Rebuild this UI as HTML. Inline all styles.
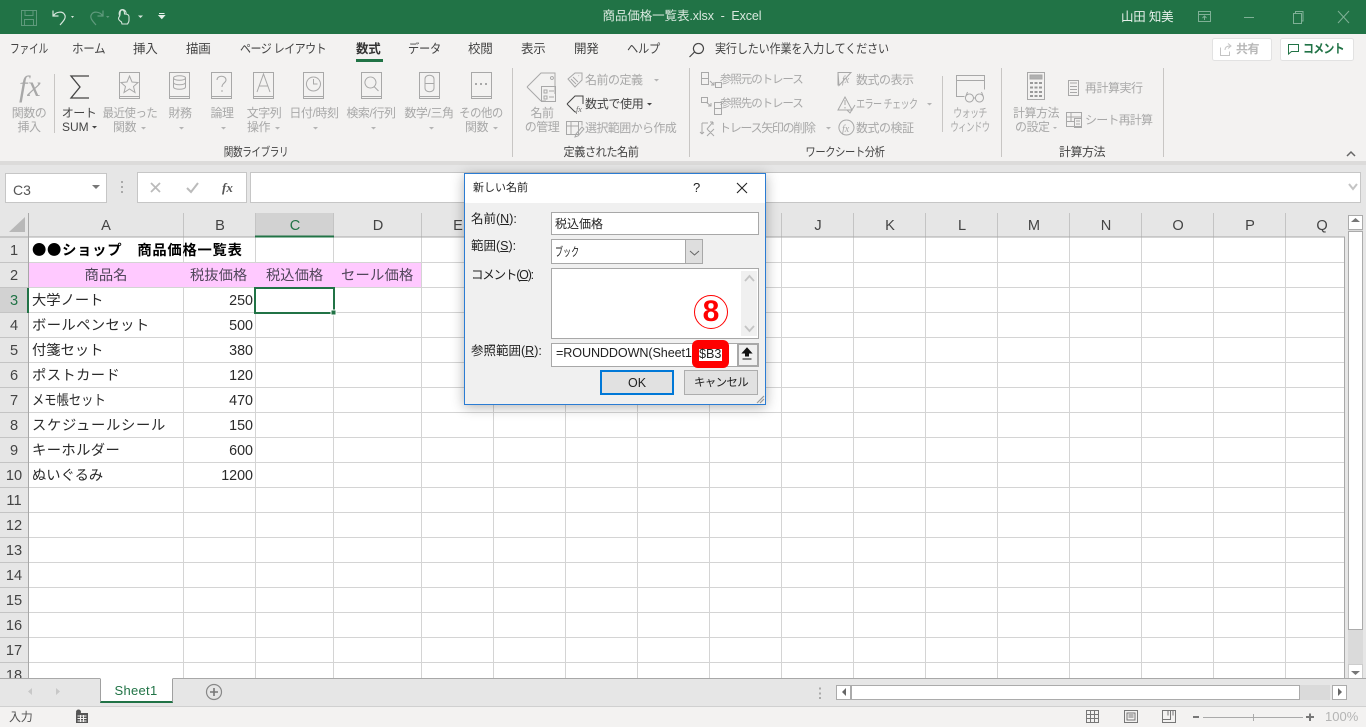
<!DOCTYPE html>
<html lang="ja"><head><meta charset="utf-8"><title>商品価格一覧表.xlsx - Excel</title>
<style>
html,body{margin:0;padding:0}
body{width:1366px;height:727px;overflow:hidden;position:relative;background:#e6e6e6;font-family:"Liberation Sans","Noto Sans CJK JP",sans-serif;}
.t{position:absolute;white-space:nowrap;line-height:16px;font-size:12px;color:#a8a8a8;letter-spacing:-.5px}
.c{transform:translateX(-50%)}
.s{transform-origin:0 50%}
.k{color:#444}
.tab{top:41px;color:#444;font-size:12.5px;letter-spacing:-.3px}
.cell{font-size:14.3px;color:#2a2a2a;letter-spacing:0;line-height:18px}
.pk{color:#50465a}
.hd{font-size:14.6px;color:#444;letter-spacing:0;line-height:18px}
.grp{color:#444;top:144px}
.b{position:absolute;box-sizing:border-box}
.dl{font-size:12.5px;color:#222;letter-spacing:0}
.dl u{text-decoration:underline}
svg{position:absolute;overflow:visible}
</style></head><body>
<!-- title bar -->
<div class="b" style="left:0;top:0;width:1366px;height:34px;background:#217346"></div>
<svg style="left:0;top:0" width="1366" height="34" fill="none">
<g stroke="#5f9a7c" stroke-width="1"><path d="M21.500 10.500h15v15h-15zM25 10.500v5h8v-5M24.500 25.500v-6h9v6"/></g>
<path d="M53 10.500v5.500h5.500M53.500 15.500c3-4 9-4.500 11-1 2 3-.5 6-4.500 10.500" stroke="#d6e6dc" stroke-width="1.200"/>
<path d="M71 16l3 0-1.500 2z" fill="#d6e6dc"/>
<path d="M103 10.500v5.500h-5.500M102.500 15.500c-3-4-9-4.500-11-1-2 3 .5 6 4.500 10.500" stroke="#5f9a7c" stroke-width="1.200"/>
<path d="M106 16l3.500 0-1.700 2z" fill="#5f9a7c"/>
<path d="M121.500 22c-1.500-1-3-2-3-3.500s1.500-2 1.500-4 0-4.500 2.200-4.500 2.300 2 2.300 4c2 0 4.500.5 4.500 3v3.500c0 1.500-1 2.500-1.500 3.500h-5.500z M119.500 15.500c-1-3 .5-6 3-6s4 2.500 3.500 5" stroke="#d6e6dc" stroke-width="1.100"/>
<path d="M138 15.500h5l-2.500 2.500z" fill="#d6e6dc"/>
<path d="M159 13.500h5.500M159 15.500h5.500l-2.700 3z" stroke="#e4efe8" stroke-width="1"/><path d="M159 15.500h5.500l-2.700 3z" fill="#e4efe8"/>
<!-- window buttons -->
<path d="M1198.500 11.500h12v10h-12zM1198.500 14.500h12M1204.500 20v-4M1202.500 18l2-2 2 2" stroke="#7fb096" stroke-width="1"/>
<path d="M1244 17.500h10" stroke="#7fb096"/>
<path d="M1293.500 13.500h8v10h-8zM1295.500 13.500v-2h7.500v9.500h-1.500" stroke="#7fb096"/>
<path d="M1338 11l11 12M1349 11l-11 12" stroke="#7fb096"/>
</svg>
<div class="t c" style="left:682px;top:8px;color:#d9e8de;font-size:12.5px;letter-spacing:-.1px">商品価格一覧表.xlsx&nbsp; -&nbsp; Excel</div>
<div class="t" style="left:1121px;top:9px;color:#e6f0ea;font-size:12.5px;letter-spacing:-.2px">山田 知美</div>
<!-- ribbon -->
<div class="b" style="left:0;top:34px;width:1366px;height:127px;background:#f3f2f1"></div>
<div class="b" style="left:0;top:161px;width:1366px;height:4px;background:#dcdbda"></div>
<span class="t tab s" style="left:10px;transform:scaleX(.78)">ファイル</span>
<span class="t tab s" style="left:72px;transform:scaleX(.92)">ホーム</span>
<span class="t tab" style="left:133px">挿入</span>
<span class="t tab" style="left:186px">描画</span>
<span class="t tab s" style="left:240px;letter-spacing:-.6px;transform:scaleX(.88)">ページ レイアウト</span>
<span class="t tab" style="left:356px;font-weight:bold;color:#333">数式</span>
<div class="b" style="left:356px;top:59px;width:27px;height:3px;background:#217346"></div>
<span class="t tab s" style="left:408px;transform:scaleX(.9)">データ</span>
<span class="t tab" style="left:468px">校閲</span>
<span class="t tab" style="left:521px">表示</span>
<span class="t tab" style="left:574px">開発</span>
<span class="t tab s" style="left:627px;transform:scaleX(.9)">ヘルプ</span>
<svg style="left:0;top:0" width="1366" height="165" fill="none">
<path d="M699.500 44.500a5 5 0 1 1-.1 0M695.500 53l-5 5" stroke="#444" stroke-width="1.200" transform="translate(-1,-1)"/>
<!-- separators -->
<g stroke="#c8c6c4">
<path d="M54.500 74v59M512.500 68v89M689.500 68v89M1001.500 68v89M1163.500 68v89M942.500 76v56"/>
</g>
<!-- fx -->
<text x="19" y="96" font-family="Liberation Serif" font-style="italic" font-size="30" fill="#a8a8a8">fx</text>
<!-- sigma -->
<path d="M89 76H71l9 11-9 11h18" stroke="#444" stroke-width="1.300"/>
<g stroke="#a8a8a8">
<!-- book icons -->
<path d="M119.500 72.500h20v26h-20zM119.500 96.500h20"/>
<path d="M129.500 76l2.500 6 6 .5-4.500 4 1.500 6-5.500-3.500-5.500 3.500 1.500-6-4.500-4 6-.5z"/>
<path d="M169.500 72.500h20v26h-20zM169.500 96.500h20M173.500 78c0-3 12-3 12 0v9c0 3-12 3-12 0zM173.500 78c0 3 12 3 12 0M173.500 82.500c0 3 12 3 12 0M173.500 87c0 3 12 3 12 0"/>
<path d="M211.500 72.500h20v26h-20zM211.500 96.500h20M217 80c0-5 9-5 9 0 0 3-4 3-4 7M222 90v2"/>
<path d="M253.500 72.500h20v26h-20zM253.500 96.500h20M257 92l6.500-18 6.500 18M259 86h9"/>
<path d="M303.500 72.500h20v26h-20zM303.500 96.500h20M313.500 77a7 7 0 1 1-.1 0M313.500 79v5h4"/>
<path d="M361.500 72.500h20v26h-20zM361.500 96.500h20M370.500 77a5.500 5.500 0 1 1-.1 0M374.500 87l4 4"/>
<path d="M419.500 72.500h20v26h-20zM419.500 96.500h20M425 79c0-5 9-5 9 0v9c0 5-9 5-9 0zM425 83.500h9"/>
<path d="M471.500 72.500h20v26h-20zM471.500 96.500h20"/>
<path d="M475 84h2M480 84h2M485 84h2" stroke-width="2"/>
<!-- tag -->
<path d="M527 87l14-14h14v21M541 101l-14-14M541 101h5"/>
<path d="M541.500 86.500h14v15h-14zM544 90h3v3h-3zM544 96h3v3h-3zM549 91h5M549 97h5"/>
<path d="M552 76.500a1.500 1.500 0 1 1-.1 0"/>
<path d="M568 79l7-6h7v7l-7 7zM578.500 75.500l.5.500M571 79l5 5M573 77l5 5"/>
<!-- selection -->
<path d="M566.500 121.500h12v13h-12zM566.500 126h12M571 121.500v13M576 134l6-7 2 2-6 7-3 1zM578 121.500h4v4"/>
<!-- trace -->
<path d="M701.500 72.500h7v6h-7zM701.500 78.500v6h7v-6M710 81l4 4M714 82v3h-3M715.500 87.500v-5h6v5z"/>
<path d="M701.500 97.500h6v5h-6zM714.500 102.500h7v6h-7zM714.500 108.500v6h7v-6M706 102l5 4M711 103v3h-3"/>
<path d="M702 123v11M702 134l-2-2M702 134l2-2M702 123h6M707 129l6-7M713 122h-3M713 122v3M707 129l7 7M714 129l-7 7"/>
<!-- formula show -->
<path d="M838 72.500h13l-12 13zM838 72.500v13"/>
<path d="M838 110l7-13 7 13zM845 100v5M845 107v1.500M847 110l3 3 5-8"/>
<path d="M846.500 120a7.500 7.500 0 1 1-.1 0"/>
<!-- watch -->
<path d="M956.500 75.500h28v5h-28zM956.500 75.500v21h8M984.500 80.500v9"/>
<path d="M969.500 94a4 4 0 1 1-.1 0M979.500 94a4 4 0 1 1-.1 0M973.500 98h2M965.500 97l2-5M983.500 97l-2-5"/>
<!-- calc -->
<path d="M1027.500 72.500h17v27h-17z"/>
<path d="M1030 75h12v4h-12z" fill="#b0b0b0"/>
<path d="M1030 83h3M1034.500 83h3M1039 83h3M1030 87.500h3M1034.500 87.500h3M1039 87.500h3M1030 92h3M1034.500 92h3M1039 92h3M1030 96h3M1034.500 96h3M1039 96h3" stroke-width="2" stroke="#999"/>
<path d="M1068.500 80.500h10v15h-10zM1070 83h7M1070 86.500h7M1070 89.500h7M1070 92.500h7"/>
<path d="M1066.500 112.500h15v14h-15zM1066.500 117h15M1066.500 121.500h8M1071 112.500v9M1074.500 118.500h7v9h-7zM1076 121h4M1076 124h4"/>
</g>
<!-- use formula tag -->
<path d="M567 104l8-8h8v8M575 112l-8-8M575 112h1" stroke="#444"/>
<text x="576" y="112" font-family="Liberation Serif" font-style="italic" font-size="8" fill="#666">fx</text>
<text x="842" y="83" font-family="Liberation Serif" font-style="italic" font-size="10" fill="#a8a8a8">fx</text>
<text x="842" y="132" font-family="Liberation Serif" font-style="italic" font-size="10" fill="#a8a8a8">fx</text>
<!-- comment -->
<rect x="1212.500" y="38.500" width="59" height="22" rx="2" fill="#fff" stroke="#e2e2e2"/>
<rect x="1280.500" y="38.500" width="73" height="22" rx="2" fill="#fff" stroke="#e2e2e2"/>
<path d="M1220.500 47.500v8h9v-4M1225 50c0-3 2-4 5-4M1228 43.500l3 2.500-3 2.500" stroke="#c4c4c4"/>
<path d="M1288.500 44.500h10v7h-7l-3 2.500z" stroke="#217346"/>
<!-- dropdown carets -->
<g fill="#b4b4b4">
<path d="M141 127h5l-2.500 2.500zM179 127h5l-2.500 2.500zM221 127h5l-2.500 2.500zM275 127h5l-2.500 2.500zM313 127h5l-2.500 2.500zM371 127h5l-2.500 2.500zM429 127h5l-2.500 2.500zM493 127h5l-2.500 2.500zM654 79h5l-2.500 2.500zM826 127h5l-2.500 2.500zM927 103h5l-2.500 2.500zM1053 127h4l-2 2z"/>
</g>
<path d="M92 126h5l-2.500 2.500zM647 103h5l-2.500 2.500z" fill="#444"/>
<path d="M1347 156l4-4 4 4" stroke="#666" stroke-width="1.500"/>
</svg>
<span class="t s" style="left:715px;top:41px;color:#444;letter-spacing:-.2px;font-size:12.500px;transform:scaleX(.887)">実行したい作業を入力してください</span>
<span class="t" style="left:1236px;top:41px;color:#b8b8b8;font-weight:bold;letter-spacing:-.5px">共有</span>
<span class="t s" style="left:1303px;top:41px;color:#217346;font-weight:bold;letter-spacing:-.7px;font-size:12.500px;transform:scaleX(.87)">コメント</span>
<!-- ribbon labels -->
<span class="t c" style="left:29px;top:105px">関数の</span><span class="t c" style="left:29px;top:119px">挿入</span>
<span class="t c k" style="left:79px;top:105px">オート</span><span class="t k" style="left:62px;top:119px;letter-spacing:0">SUM</span>
<span class="t c" style="left:130px;top:105px;transform:translateX(-50%) scaleX(.95)">最近使った</span><span class="t" style="left:113px;top:119px">関数</span>
<span class="t c" style="left:180px;top:105px">財務</span>
<span class="t c" style="left:222px;top:105px">論理</span>
<span class="t c" style="left:264px;top:105px">文字列</span><span class="t" style="left:247px;top:119px">操作</span>
<span class="t c" style="left:314px;top:105px;letter-spacing:-.4px">日付/時刻</span>
<span class="t c" style="left:371px;top:105px;letter-spacing:-.4px">検索/行列</span>
<span class="t c" style="left:429px;top:105px;letter-spacing:-.4px">数学/三角</span>
<span class="t c" style="left:481px;top:105px;transform:translateX(-50%) scaleX(.95)">その他の</span><span class="t" style="left:465px;top:119px">関数</span>
<span class="t c grp" style="left:256px;transform:translateX(-50%) scaleX(.8)">関数ライブラリ</span>
<span class="t c" style="left:542px;top:105px">名前</span><span class="t c" style="left:542px;top:119px">の管理</span>
<span class="t" style="left:585px;top:72px">名前の定義</span>
<span class="t k" style="left:585px;top:96px;letter-spacing:-.3px">数式で使用</span>
<span class="t" style="left:585px;top:120px;letter-spacing:-.6px">選択範囲から作成</span>
<span class="t c grp" style="left:601px;transform:translateX(-50%) scaleX(.93)">定義された名前</span>
<span class="t" style="left:720px;top:72px;letter-spacing:-1.100px;font-size:11.500px">参照元のトレース</span>
<span class="t" style="left:720px;top:96px;letter-spacing:-1.100px;font-size:11.500px">参照先のトレース</span>
<span class="t" style="left:719px;top:120px;letter-spacing:-1.300px">トレース矢印の削除</span>
<span class="t" style="left:856px;top:72px">数式の表示</span>
<span class="t s" style="left:856px;top:96px;letter-spacing:-.8px;transform:scaleX(.76)">エラー チェック</span>
<span class="t" style="left:856px;top:120px">数式の検証</span>
<span class="t c" style="left:970px;top:105px;letter-spacing:-.8px;transform:translateX(-50%) scaleX(.75)">ウォッチ</span><span class="t c" style="left:970px;top:119px;letter-spacing:-.8px;transform:translateX(-50%) scaleX(.7)">ウィンドウ</span>
<span class="t c grp" style="left:845px;transform:translateX(-50%) scaleX(.86)">ワークシート分析</span>
<span class="t c" style="left:1036px;top:105px">計算方法</span><span class="t" style="left:1015px;top:119px">の設定</span>
<span class="t" style="left:1085px;top:80px">再計算実行</span>
<span class="t" style="left:1085px;top:112px;letter-spacing:-.8px">シート再計算</span>
<span class="t c grp" style="left:1082px">計算方法</span>
<!-- formula bar -->
<div class="b" style="left:5px;top:173px;width:102px;height:30px;background:#fff;border:1px solid #c6c6c6"></div>
<span class="t" style="left:13px;top:182px;font-size:14px;color:#555;letter-spacing:0">C3</span>
<div class="b" style="left:137px;top:172px;width:110px;height:31px;background:#fff;border:1px solid #c6c6c6"></div>
<div class="b" style="left:250px;top:172px;width:1111px;height:31px;background:#fff;border:1px solid #c6c6c6"></div>
<svg style="left:0;top:0" width="1366" height="240" fill="none">
<path d="M92 185h8l-4 4z" fill="#777"/>
<path d="M122 181v2M122 186v2M122 191v2" stroke="#aaa" stroke-width="2"/>
<path d="M151 183l9 9M160 183l-9 9" stroke="#bbb" stroke-width="1.800"/>
<path d="M187 188l4 4 7-9" stroke="#bbb" stroke-width="2"/>
<text x="222" y="192" font-family="Liberation Serif" font-style="italic" font-weight="bold" font-size="13" fill="#555">fx</text>
<path d="M1349 184l4 5 4-5" stroke="#c4c4c4" stroke-width="2"/>
</svg>
<!-- grid -->
<div class="b" style="left:0;top:213px;width:1345px;height:466px;background:#fff"></div>
<div class="b" style="left:0;top:213px;width:1345px;height:24px;background:#e6e6e6"></div>
<div class="b" style="left:0;top:237px;width:28px;height:442px;background:#e6e6e6"></div>
<div class="b" style="left:29px;top:262px;width:392px;height:25px;background:#ffc9ff"></div>
<div class="b" style="left:255px;top:213px;width:79px;height:24px;background:#d2d2d2"></div>
<div class="b" style="left:0;top:288px;width:28px;height:24px;background:#d2d2d2"></div>
<svg style="left:0;top:0" width="1366" height="727" fill="none">
<g stroke="#d4d4d4">
<path d="M29 262.500H1344M29 287.500H1344M29 312.500H1344M29 337.500H1344M29 362.500H1344M29 387.500H1344M29 412.500H1344M29 437.500H1344M29 462.500H1344M29 487.500H1344M29 512.500H1344M29 537.500H1344M29 562.500H1344M29 587.500H1344M29 612.500H1344M29 637.500H1344M29 662.500H1344"/>
<path d="M183.500 237V262M183.500 288V678M255.500 237V262M255.500 288V678M333.500 237V262M333.500 288V678M421.500 237V678M493.500 237V678M565.500 237V678M637.500 237V678M709.500 237V678M781.500 237V678M853.500 237V678M925.500 237V678M997.500 237V678M1069.500 237V678M1141.500 237V678M1213.500 237V678M1285.500 237V678"/>
</g>
<g stroke="#c4c4c4">
<path d="M183.500 213V237M255.500 213V237M333.500 213V237M421.500 213V237M493.500 213V237M565.500 213V237M637.500 213V237M709.500 213V237M781.500 213V237M853.500 213V237M925.500 213V237M997.500 213V237M1069.500 213V237M1141.500 213V237M1213.500 213V237M1285.500 213V237"/>
<path d="M0 262.500H28M0 287.500H28M0 312.500H28M0 337.500H28M0 362.500H28M0 387.500H28M0 412.500H28M0 437.500H28M0 462.500H28M0 487.500H28M0 512.500H28M0 537.500H28M0 562.500H28M0 587.500H28M0 612.500H28M0 637.500H28M0 662.500H28"/>
</g>
<path d="M0 237H1345M28.500 213V679M1344.500 237V679" stroke="#a8a8a8" stroke-width="1"/>
<path d="M25 217v15H9z" fill="#b8b8b8"/>
<path d="M255 236.500h79" stroke="#217346" stroke-width="2"/>
<path d="M28 288v25" stroke="#217346" stroke-width="2"/>
<rect x="255" y="288" width="79" height="25" stroke="#217346" stroke-width="2"/>
<rect x="331" y="310" width="5" height="5" fill="#217346" stroke="#fff" stroke-width="1"/>
</svg>
<!-- column headers -->
<span class="t hd c" style="left:106px;top:217px">A</span><span class="t hd c" style="left:220px;top:217px">B</span><span class="t hd c" style="left:295px;top:217px;color:#217346">C</span><span class="t hd c" style="left:378px;top:217px">D</span><span class="t hd c" style="left:458px;top:217px">E</span><span class="t hd c" style="left:818px;top:217px">J</span><span class="t hd c" style="left:890px;top:217px">K</span><span class="t hd c" style="left:962px;top:217px">L</span><span class="t hd c" style="left:1034px;top:217px">M</span><span class="t hd c" style="left:1106px;top:217px">N</span><span class="t hd c" style="left:1178px;top:217px">O</span><span class="t hd c" style="left:1250px;top:217px">P</span><span class="t hd c" style="left:1322px;top:217px">Q</span>
<!-- row headers -->
<span class="t hd c" style="left:14px;top:242px">1</span><span class="t hd c" style="left:14px;top:267px">2</span><span class="t hd c" style="left:14px;top:292px;color:#217346">3</span><span class="t hd c" style="left:14px;top:317px">4</span><span class="t hd c" style="left:14px;top:342px">5</span><span class="t hd c" style="left:14px;top:367px">6</span><span class="t hd c" style="left:14px;top:392px">7</span><span class="t hd c" style="left:14px;top:417px">8</span><span class="t hd c" style="left:14px;top:442px">9</span><span class="t hd c" style="left:14px;top:467px">10</span><span class="t hd c" style="left:14px;top:492px">11</span><span class="t hd c" style="left:14px;top:517px">12</span><span class="t hd c" style="left:14px;top:542px">13</span><span class="t hd c" style="left:14px;top:567px">14</span><span class="t hd c" style="left:14px;top:592px">15</span><span class="t hd c" style="left:14px;top:617px">16</span><span class="t hd c" style="left:14px;top:642px">17</span><span class="t hd c" style="left:14px;top:667px">18</span>
<!-- cells -->
<span class="t cell" style="left:32px;top:241px;font-weight:bold;color:#000;letter-spacing:.75px;font-family:'Noto Sans CJK JP',sans-serif">●●ショップ　商品価格一覧表</span>
<span class="t cell c pk" style="left:106px;top:267px">商品名</span>
<span class="t cell pk" style="left:190px;top:267px">税抜価格</span>
<span class="t cell pk" style="left:266px;top:267px">税込価格</span>
<span class="t cell pk" style="left:341px;top:267px;letter-spacing:.2px">セール価格</span>
<span class="t cell" style="left:32px;top:292px">大学ノート</span><span class="t cell" style="right:1113px;top:292px">250</span>
<span class="t cell" style="left:32px;top:317px;letter-spacing:.4px">ボールペンセット</span><span class="t cell" style="right:1113px;top:317px">500</span>
<span class="t cell" style="left:32px;top:342px">付箋セット</span><span class="t cell" style="right:1113px;top:342px">380</span>
<span class="t cell" style="left:32px;top:367px;letter-spacing:.4px">ポストカード</span><span class="t cell" style="right:1113px;top:367px">120</span>
<span class="t cell s" style="left:32px;top:392px;transform:scaleX(.86)">メモ帳セット</span><span class="t cell" style="right:1113px;top:392px">470</span>
<span class="t cell" style="left:32px;top:417px;letter-spacing:.7px">スケジュールシール</span><span class="t cell" style="right:1113px;top:417px">150</span>
<span class="t cell" style="left:32px;top:442px;letter-spacing:.4px">キーホルダー</span><span class="t cell" style="right:1113px;top:442px">600</span>
<span class="t cell" style="left:32px;top:467px">ぬいぐるみ</span><span class="t cell" style="right:1113px;top:467px">1200</span>
<!-- vertical scrollbar -->
<div class="b" style="left:1348px;top:215px;width:15px;height:464px;background:#dadada"></div>
<div class="b" style="left:1348px;top:215px;width:15px;height:15px;background:#fff;border:1px solid #ababab"></div>
<div class="b" style="left:1348px;top:231px;width:15px;height:399px;background:#fff;border:1px solid #ababab"></div>
<div class="b" style="left:1348px;top:664px;width:15px;height:15px;background:#fff;border:1px solid #ccc"></div>
<!-- tabs -->
<div class="b" style="left:0;top:678px;width:1366px;height:28px;background:#e6e6e6;border-top:1px solid #a8a8a8"></div>
<div class="b" style="left:0;top:706px;width:1366px;height:21px;background:#f3f2f1;border-top:1px solid #d0d0d0"></div>
<div class="b" style="left:100px;top:678px;width:73px;height:25px;background:#fff;border:1px solid #a0a0a0;border-top-color:#fff;border-bottom:2px solid #217346"></div>
<span class="t c" style="left:136px;top:683px;color:#217346;font-size:13px;letter-spacing:.3px">Sheet1</span>
<!-- h scrollbar -->
<div class="b" style="left:836px;top:685px;width:15px;height:15px;background:#fff;border:1px solid #ababab"></div>
<div class="b" style="left:851px;top:685px;width:449px;height:15px;background:#fff;border:1px solid #ababab"></div>
<div class="b" style="left:1300px;top:685px;width:30px;height:15px;background:#dadada"></div>
<div class="b" style="left:1332px;top:685px;width:15px;height:15px;background:#fff;border:1px solid #ababab"></div>
<svg style="left:0;top:0" width="1366" height="727" fill="none">
<path d="M1351 222l4.500-4 4.500 4z" fill="#777"/>
<path d="M1351 671h9l-4.500 4z" fill="#777"/>
<path d="M846 688v8l-4-4zM1338 688v8l4-4z" fill="#666"/>
<path d="M32 688v7l-4-3.500zM56 688v7l4-3.500z" fill="#c8c8c8"/>
<path d="M820 687.500v2M820 692.500v2M820 697v2" stroke="#aaa" stroke-width="2"/>
<circle cx="214" cy="692" r="7.500" stroke="#888" stroke-width="1.200"/><path d="M210 692h8M214 688v8" stroke="#777" stroke-width="1.600"/>
<circle cx="78.500" cy="712" r="2.500" fill="#555"/>
<path d="M76 713h12v10H76z" fill="#555"/><path d="M77.500 716h9M77.500 718.500h9M77.500 721h9M80.500 715v7M83.500 715v7" stroke="#f3f2f1"/>
<path d="M1086.500 710.500h12v12h-12zM1086.500 714.500h12M1086.500 718.500h12M1090.500 710.500v12M1094.500 710.500v12" stroke="#777"/>
<path d="M1124.500 710.500h13v12h-13zM1127 713h8v7h-8zM1128.500 715h5M1128.500 717h5" stroke="#777"/>
<path d="M1162.500 710.500h13v12h-13zM1162.500 719.500h8v-9M1168 710.500v5M1173 710.500v5" stroke="#777"/>
<path d="M1193 717h6" stroke="#777" stroke-width="2"/><path d="M1203 717.500h100M1253.500 714v7" stroke="#aaa"/><path d="M1306 717h8M1310 713.500v7.500" stroke="#777" stroke-width="2"/>
</svg>
<span class="t" style="left:9px;top:709px;color:#555;letter-spacing:-.2px">入力</span>
<span class="t" style="left:1325px;top:709px;color:#b4b4b4;letter-spacing:0;font-size:13px">100%</span>
<!-- dialog -->
<div class="b" style="left:464px;top:173px;width:302px;height:232px;background:#f0f0f0;border:1px solid #2b7cd3;box-shadow:0 2px 12px rgba(0,0,0,.3)"></div>
<div class="b" style="left:465px;top:174px;width:300px;height:29px;background:#fff"></div>
<span class="t dl" style="left:473px;top:180px;font-size:11px;letter-spacing:0">新しい名前</span>
<span class="t dl" style="left:693px;top:180px;font-size:13px">?</span>
<svg style="left:0;top:0" width="1366" height="727" fill="none">
<path d="M737 183l10 10M747 183l-10 10" stroke="#222" stroke-width="1.100"/>
</svg>
<span class="t dl" style="left:471px;top:211px">名前(<u>N</u>):</span>
<span class="t dl" style="left:471px;top:238px">範囲(<u>S</u>):</span>
<span class="t dl" style="left:471px;top:267px;letter-spacing:-1.200px">コメント(<u>O</u>):</span>
<span class="t dl" style="left:471px;top:343px">参照範囲(<u>R</u>):</span>
<div class="b" style="left:551px;top:212px;width:208px;height:23px;background:#fff;border:1px solid #a8a8a8"></div>
<span class="t dl" style="left:555px;top:216px;letter-spacing:0;font-size:12px">税込価格</span>
<div class="b" style="left:551px;top:239px;width:152px;height:25px;background:#fff;border:1px solid #a8a8a8"></div>
<div class="b" style="left:685px;top:240px;width:17px;height:23px;background:#dedede;border-left:1px solid #a8a8a8"></div>
<span class="t dl s" style="left:555px;top:244px;letter-spacing:0;font-size:12px;transform:scaleX(.67)">ブック</span>
<div class="b" style="left:551px;top:268px;width:208px;height:71px;background:#fff;border:1px solid #a8a8a8"></div>
<div class="b" style="left:741px;top:271px;width:16px;height:65px;background:#f0f0f0"></div>
<div class="b" style="left:551px;top:343px;width:208px;height:24px;background:#fff;border:1px solid #a8a8a8"></div>
<div class="b" style="left:737px;top:343px;width:22px;height:24px;background:#f0f0f0;border:2px solid #a8a8a8"></div>
<span class="t dl" style="left:556px;top:345px;letter-spacing:-.1px;font-size:12.600px">=ROUNDDOWN(Sheet1</span>
<div class="b" style="left:692px;top:340px;width:37px;height:28px;background:#f00;border-radius:6px"></div>
<div class="b" style="left:699px;top:349px;width:23px;height:12px;background:#fff"></div>
<span class="t dl" style="left:699px;top:346px;font-size:12.600px;letter-spacing:0">$B3</span>
<div class="b" style="left:600px;top:370px;width:74px;height:25px;background:#e1e1e1;border:2px solid #0078d7"></div>
<span class="t dl c" style="left:637px;top:375px;font-size:12.500px">OK</span>
<div class="b" style="left:684px;top:370px;width:74px;height:25px;background:#e1e1e1;border:1px solid #adadad"></div>
<span class="t dl c" style="left:721px;top:375px;letter-spacing:-.7px;font-size:11.500px">キャンセル</span>
<div class="b" style="left:693px;top:294px;width:36px;height:36px;border-radius:50%;background:#fff;box-shadow:0 0 3px rgba(255,255,255,.9)"></div>
<div class="b" style="left:694px;top:295px;width:34px;height:34px;border-radius:50%;border:1.500px solid #f00"></div>
<span class="t c" style="left:711px;top:298px;font-size:30px;line-height:28px;font-weight:bold;color:#f00;letter-spacing:0">8</span>
<svg style="left:0;top:0" width="1366" height="727" fill="none">
<path d="M698 252l4.500 4 4.500-4" stroke="#666" transform="translate(-8,-1)"/>
<path d="M745 281l4.500-5 4.500 5" stroke="#c4c4c4" stroke-width="1.800"/>
<path d="M745 326l4.500 5 4.500-5" stroke="#c4c4c4" stroke-width="1.800"/>
<path d="M742.500 353l4.500-5 4.500 5h-3v3h-3v-3zM742.500 359h9" stroke="#111" fill="#111"/>
<path d="M757 403l7-7M760 403l4-4" stroke="#999" stroke-width="1.200"/>
</svg>
</body></html>
